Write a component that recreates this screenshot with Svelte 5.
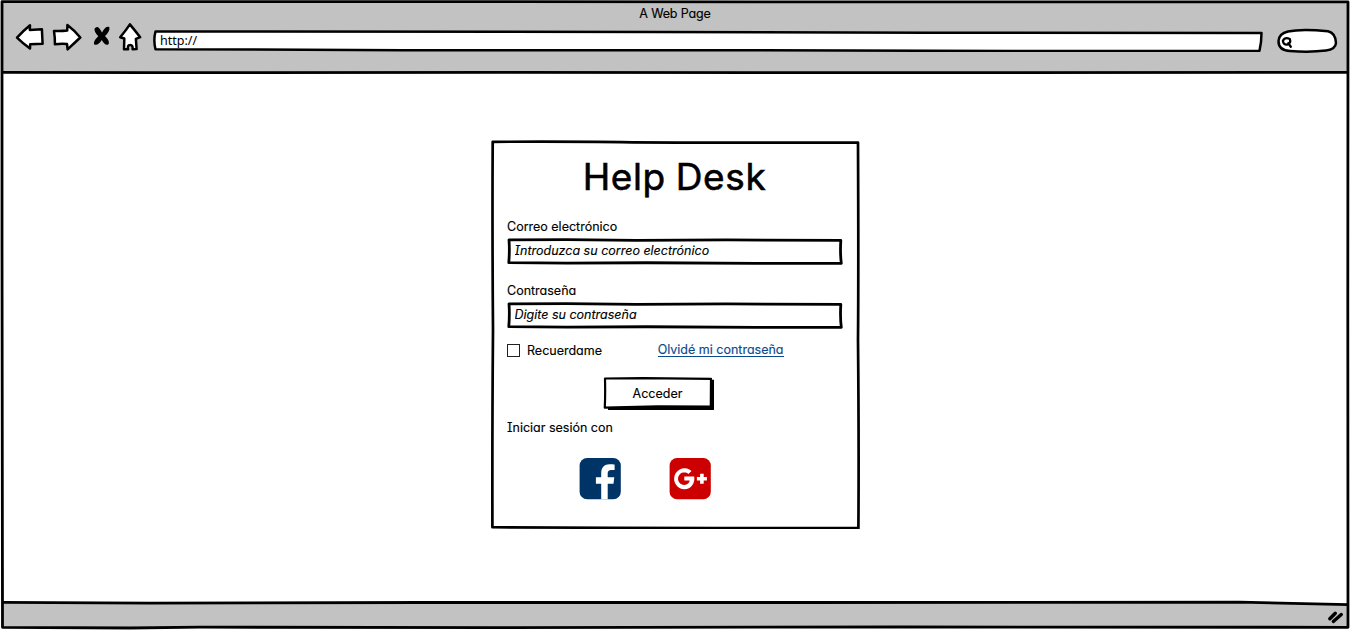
<script>
  let email = $state('');
  let password = $state('');
  let remember = $state(false);
</script>

<div class="window">
  <header class="toolbar">
    <div class="title">A Web Page</div>
    <div class="controls">
      <svg class="nav" width="128" height="32" viewBox="15 21 128 32" aria-hidden="true">
        <g fill="#fff" stroke="#000" stroke-width="2.5" stroke-linejoin="round" stroke-linecap="round">
          <path d="M17 37.6 Q23.500 30.500 30 25.200 L29.800 29.900 L41.900 29.200 L42.600 43.800 L30.200 44.200 L30 48.500 Q23 43.500 17 37.600Z" />
          <path d="M54 30.900 Q60.500 31.400 67.200 30.600 L67.400 25.100 Q74.500 30.500 80.300 37.500 Q74.500 43 67.600 49.300 L67 44 Q61 43.500 54.900 44.300 Q55 37.500 54 30.900Z" />
          <path d="M129.900 24.400 Q134.500 30 140.200 37.200 L135.900 38.800 L136.600 49 L132.600 49.200 Q133 44.700 130 44.900 Q127.200 45 128.100 49.200 L124 49.300 L124.300 38.500 L120.200 37.200 Q125.800 30.600 129.900 24.400Z" />
        </g>
        <path d="M94.600 28.500 Q98 24 102 32.500 Q105.500 25.500 109.300 27 Q110.500 31 105 36 Q110.800 42 108.200 44.500 Q105 46 101.800 40 Q98 46 94.200 44.400 Q92.800 41.500 98.300 36.300 Q93.800 31.500 94.600 28.500Z" fill="#000" />
      </svg>
      <div class="address">
        <svg class="lines" viewBox="0 0 1110 22" preserveAspectRatio="none" aria-hidden="true">
          <path d="M2.500 1.500 C120 1 310 1.300 500 2 S930 3.200 1108.500 3 Q1108.500 12 1106.500 20.800 L860 21 L560 20.200 L250 20.200 L2.500 19.200 Q.2 10 2.500 1.500Z" fill="#fff" stroke="#000" stroke-width="2.500" stroke-linejoin="round" />
        </svg>
        <span>http://</span>
      </div>
      <svg class="search" width="62" height="26" viewBox="1276 28 62 26" aria-hidden="true">
        <path d="M1288 31.500 C1300 28.800 1318 30.200 1328 31.300 Q1335.500 33 1336 43 Q1335.500 49.500 1326 50.500 Q1310 52.500 1290 51 Q1278.500 50.500 1278.500 41 Q1279 33.500 1288 31.500Z" fill="#fff" stroke="#000" stroke-width="2.500" />
        <path d="M1289.800 39 Q1285 36.700 1282.900 40.800 Q1283.300 45 1287.500 44.500 Q1291.300 43 1289.800 39Z M1288.300 43.300 L1290.800 46.700" fill="none" stroke="#000" stroke-width="2.300" stroke-linecap="round" />
      </svg>
    </div>
  </header>

  <main>
    <form class="card" onsubmit={(e) => e.preventDefault()}>
      <svg class="lines" viewBox="0 0 369 389" aria-hidden="true">
        <path d="M1.700 1.800 Q90 1.500 130 2.200 T367 2.500 Q367.600 130 367 200 Q368 300 367.400 388.200 L230 388.200 L120 387.800 L1.400 387.200 Q1.200 280 2 190 Q1.200 90 1.700 1.800Z" fill="none" stroke="#000" stroke-width="2.700" stroke-linejoin="round" />
      </svg>
      <h1>Help Desk</h1>

      <label for="email">Correo electrónico</label>
      <div class="field">
        <svg class="lines" viewBox="0 0 337 27" aria-hidden="true">
          <path d="M2 1.800 L60 1.600 L130 2.300 L220 1.800 L334.800 2.400 Q334 15 335.300 25.400 L250 25.400 L140 24.800 L60 25.200 L1.800 24.700 Q2.800 12 2 1.800Z" fill="none" stroke="#000" stroke-width="2.800" stroke-linejoin="round" />
        </svg>
        <input id="email" type="text" bind:value={email} placeholder="Introduzca su correo electrónico" />
      </div>

      <label class="second" for="password">Contraseña</label>
      <div class="field">
        <svg class="lines" viewBox="0 0 337 27" aria-hidden="true">
          <path d="M2 1.800 L60 1.600 L130 2.300 L220 1.800 L334.800 2.400 Q334 15 335.300 25.400 L250 25.400 L140 24.800 L60 25.200 L1.800 24.700 Q2.800 12 2 1.800Z" fill="none" stroke="#000" stroke-width="2.800" stroke-linejoin="round" />
        </svg>
        <input id="password" type="password" bind:value={password} placeholder="Digite su contraseña" />
      </div>

      <div class="options">
        <label class="remember"><input type="checkbox" bind:checked={remember} />Recuerdame</label>
        <a href="#forgot">Olvidé mi contraseña</a>
      </div>

      <button type="submit">
        <svg class="lines" viewBox="0 0 111 34" aria-hidden="true">
          <path d="M108 2.800 L111 2.800 L111 33 L5 33 L5 29 L108 29Z" fill="#000" />
          <path d="M2 1.500 L40 1.100 L108 1.900 L107.800 29.600 L55 29.300 L1.800 30.600 Q2.400 17 2 1.500Z" fill="#fff" stroke="#000" stroke-width="2.200" stroke-linejoin="round" />
        </svg>
        <span>Acceder</span>
      </button>

      <p>Iniciar sesión con</p>
      <div class="social">
        <svg width="42" height="42" viewBox="0 0 42 42" role="img" aria-label="Facebook">
          <rect x=".6" y="0" width="41.200" height="41.200" rx="7.500" fill="#036" />
          <path d="M22.200 41.200 V25.700 H16.900 V19.300 H22.200 V14.900 C22.200 9.200 25.500 6.200 30.500 6.200 C32.700 6.200 34.500 6.300 35.600 6.400 V12 H32.400 C29.600 12 28.700 13.400 28.700 15.400 V19.300 H35.300 L34.500 25.700 H28.700 V41.200Z" fill="#fff" />
        </svg>
        <svg width="42" height="42" viewBox="0 0 42 42" role="img" aria-label="Google Plus">
          <rect x=".6" y="0" width="41.200" height="41.200" rx="7.500" fill="#c00" />
          <path d="M15.300 18.600 H25.200 C26.200 25.200 22.300 31.300 15.300 31.300 A10.500 10.500 0 1 1 22.500 12.900 L19.400 15.900 A6.300 6.300 0 1 0 15.300 27 C18.700 27 20.300 25 20.700 22.600 H15.300Z" fill="#fff" />
          <path d="M31.100 15.800 H34.700 V19 H37.900 V22.400 H34.700 V25.700 H31.100 V22.400 H27.900 V19 H31.100Z" fill="#fff" />
        </svg>
      </div>
    </form>
  </main>

  <footer>
    <svg width="18" height="14" viewBox="0 0 18 14" aria-hidden="true">
      <path d="M2.800 8.800 L8.300 3.200 M6.300 11.500 L14.300 4.500" fill="none" stroke="#000" stroke-width="3.400" stroke-linecap="round" />
    </svg>
  </footer>

  <svg class="lines" viewBox="0 0 1350 630" aria-hidden="true">
    <path d="M1240 602 L1348 604.600 L1348 600 L1240 600Z" fill="#fff" />
    <g fill="none" stroke="#000" stroke-width="2.800" stroke-linejoin="round">
      <path d="M2 1.700 L500 1.600 L900 1.900 L1348 1.900 Q1347.500 150 1347.800 300 T1348 627.300 L900 627 L500 627.600 L200 627.200 L130 628 L2.500 627.300 Q1.500 400 2 240 T2 1.700Z" />
      <path d="M3 72.300 L150 72.700 L500 72.400 L900 72.700 L1348 72.300" />
      <path d="M3 602.400 L150 603.200 L420 602.500 L800 602.500 L1240 602.200 L1348 604.600" />
    </g>
  </svg>
</div>

<style>
  :global(body) { margin: 0; background: #fff; }
  * { box-sizing: border-box; }
  .window {
    position: relative;
    display: flex;
    flex-direction: column;
    width: 1350px;
    height: 630px;
    padding: 1px 2px 2px;
    overflow: hidden;
    color: #000;
    background: #fff;
    font: 12.5px/16px Inter, sans-serif;
    font-feature-settings: "cv11", "cv08";
    -webkit-text-stroke: .15px currentColor;
  }
  .lines { position: absolute; inset: 0; width: 100%; height: 100%; pointer-events: none; }
  .toolbar { height: 72px; background: #c2c2c2; }
  .title { height: 20px; padding-top: 5px; text-align: center; letter-spacing: -.15px; }
  .controls { display: flex; align-items: flex-start; padding-left: 13px; }
  .address { position: relative; width: 1110px; height: 22px; margin: 9px 0 0 10px; padding: 3px 7px; font-family: "Noto Sans", sans-serif; -webkit-text-stroke: 0; }
  .address span { position: relative; }
  .search { margin: 7px 0 0 13px; }
  main { display: flex; flex: 1; justify-content: center; align-items: flex-start; padding-top: 67px; }
  .card { position: relative; display: flex; flex-direction: column; width: 369px; height: 389px; padding: 15px 17px 0 16px; }
  h1 { margin: 0; height: 63px; font-size: 37px; line-height: 44px; font-weight: 400; letter-spacing: .6px; word-spacing: -1px; text-align: center; -webkit-text-stroke: .6px #000; }
  label { height: 20px; padding: 1px 0 0 .5px; }
  .second { margin-top: 17px; }
  .field { position: relative; height: 27px; }
  .field input {
    position: relative; display: block; width: 100%; height: 27px; margin: 0; padding: 0 8px 2px; border: 0; outline: 0;
    background: transparent; color: #000; font: italic 12.5px/16px Inter, sans-serif; font-feature-settings: inherit;
  }
  .field input::placeholder { color: #000; opacity: 1; }
  .options { display: flex; align-items: flex-start; justify-content: space-between; height: 35px; margin-top: 13px; padding-right: 59px; }
  .remember { display: flex; align-items: center; gap: 7px; height: 18px; padding: 0; }
  .remember input { appearance: none; width: 13px; height: 13px; margin: 0 0 2px .5px; border: 1px solid #222; background: #fff; }
  .remember input:checked { background: #000; }
  a { color: #0b4a8f; text-decoration: none; border-bottom: 1px solid #0b4a8f; line-height: 15px; height: 15px; }
  button { position: relative; width: 111px; height: 34px; margin: 0 0 0 96px; padding: 1px 2px 1px 1px; border: 0; background: none; color: #000; font: inherit; font-feature-settings: inherit; }
  button span { position: relative; }
  p { margin: 9px 0 0; padding-left: .5px; }
  .social { display: flex; gap: 48px; margin: 22px 0 0 72px; }
  footer { display: flex; justify-content: flex-end; height: 26px; padding: 8px 3px 0 0; background: #c2c2c2; }
</style>
